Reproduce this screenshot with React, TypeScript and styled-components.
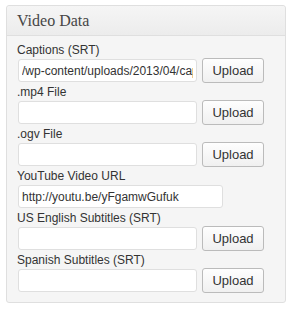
import React from 'react';
import styled, { createGlobalStyle } from 'styled-components';

const GlobalStyle = createGlobalStyle`
  html, body {
    margin: 0;
    padding: 0;
    background: #ffffff;
  }
  body {
    font-family: 'Liberation Sans', Arial, sans-serif;
    font-size: 12px;
    color: #333333;
  }
`;

const StyledPage = styled.div`
  padding: 5px 0 0 6px;
`;

const StyledBox = styled.div`
  width: 278px;
  border: 1px solid #dfdfdf;
  border-radius: 3px;
  background-color: #f5f5f5;
  box-sizing: content-box;
`;

const StyledHeader = styled.h3`
  margin: 0;
  height: 29px;
  line-height: 29px;
  padding: 0 10px;
  border-bottom: 1px solid #dfdfdf;
  background: linear-gradient(to bottom, #f5f5f5, #ececec);
  border-radius: 3px 3px 0 0;
  font-family: 'Liberation Serif', 'Times New Roman', serif;
  font-size: 16px;
  font-weight: normal;
  color: #464646;
`;

const StyledBody = styled.div`
  padding: 5px 11px 9px 10px;
  display: flex;
  flex-direction: column;
`;

const StyledField = styled.div`
  display: flex;
  flex-direction: column;
  margin-bottom: 1px;
`;

const StyledLabel = styled.label`
  line-height: 18px;
  height: 18px;
  font-size: 12px;
  color: #333333;
`;

const StyledRow = styled.div`
  display: flex;
  align-items: center;
  gap: 5px;
  height: 23px;
  padding-left: 1px;
`;

type StyledInputProps = { $width: number };
const StyledInput = styled.input<StyledInputProps>`
  width: ${({ $width }) => $width}px;
  height: 23px;
  box-sizing: border-box;
  border: 1px solid #dfdfdf;
  border-radius: 3px;
  background: #ffffff;
  padding: 0 3px;
  font-family: 'Liberation Sans', Arial, sans-serif;
  font-size: 12px;
  color: #333333;
  outline: none;
`;

const StyledButton = styled.button`
  width: 62px;
  height: 25px;
  box-sizing: border-box;
  border: 1px solid #bbbbbb;
  border-radius: 3px;
  background: linear-gradient(to bottom, #fefefe, #f0f0f0);
  font-family: 'Liberation Sans', Arial, sans-serif;
  font-size: 13px;
  color: #333333;
  padding: 0;
  cursor: pointer;
`;

type Field = { label: string; value?: string; upload: boolean };

const FIELDS: Field[] = [
  { label: 'Captions (SRT)', value: '/wp-content/uploads/2013/04/captions.srt', upload: true },
  { label: '.mp4 File', upload: true },
  { label: '.ogv File', upload: true },
  { label: 'YouTube Video URL', value: 'http://youtu.be/yFgamwGufuk', upload: false },
  { label: 'US English Subtitles (SRT)', upload: true },
  { label: 'Spanish Subtitles (SRT)', upload: true },
];

const App: React.FC = () => (
  <>
    <GlobalStyle />
    <StyledPage>
      <StyledBox>
        <StyledHeader>Video Data</StyledHeader>
        <StyledBody>
          {FIELDS.map((field) => (
            <StyledField key={field.label}>
              <StyledLabel>{field.label}</StyledLabel>
              <StyledRow>
                <StyledInput
                  $width={field.upload ? 179 : 205}
                  type="text"
                  defaultValue={field.value ?? ''}
                />
                {field.upload && <StyledButton type="button">Upload</StyledButton>}
              </StyledRow>
            </StyledField>
          ))}
        </StyledBody>
      </StyledBox>
    </StyledPage>
  </>
);

export default App;
